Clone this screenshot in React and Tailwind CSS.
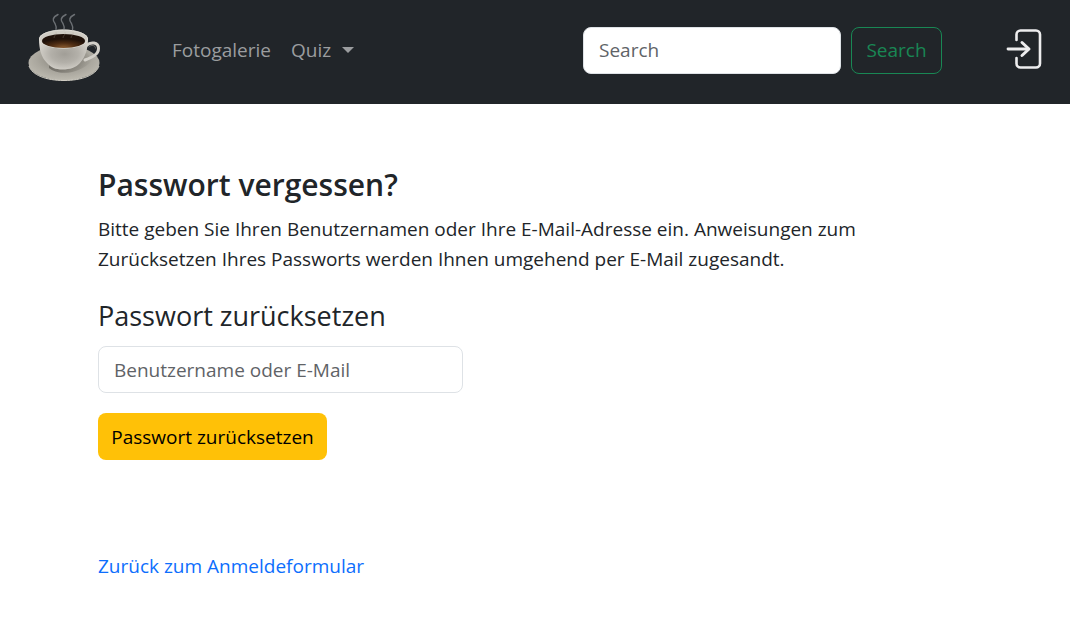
function CoffeeLogo() {
  return (
    <svg width="76" height="72" viewBox="0 0 76 72" fill="none" aria-hidden="true">
      <defs>
        <radialGradient id="saucer" cx="0.5" cy="0.4" r="0.62">
          <stop offset="0" stopColor="#7d7a72" />
          <stop offset="0.6" stopColor="#a9a69d" />
          <stop offset="1" stopColor="#bfbcb2" />
        </radialGradient>
        <radialGradient id="cup" cx="0.52" cy="0.5" r="0.62">
          <stop offset="0" stopColor="#a19e97" />
          <stop offset="0.45" stopColor="#b3b0a9" />
          <stop offset="0.85" stopColor="#d2cfc8" />
          <stop offset="1" stopColor="#dfdcd5" />
        </radialGradient>
        <radialGradient id="coffee" cx="0.5" cy="0.95" r="0.6">
          <stop offset="0" stopColor="#86582e" />
          <stop offset="0.5" stopColor="#4d2c13" />
          <stop offset="1" stopColor="#1f1109" />
        </radialGradient>
        <linearGradient id="shadow" x1="0" y1="0" x2="1" y2="0">
          <stop offset="0" stopColor="#5d5a53" stopOpacity="0.7" />
          <stop offset="1" stopColor="#5d5a53" stopOpacity="0" />
        </linearGradient>
      </defs>
      <ellipse cx="37" cy="51" rx="35.500" ry="17.500" fill="url(#saucer)" />
      <path d="M2 54c3 9 17 14.500 35 14.500S69 63 72 54" stroke="#d3d0c6" strokeWidth="1" />
      <path d="M22 56c8 7 28 8 44-8l-6-7-38 9z" fill="url(#shadow)" />
      <path
        d="M59.500 33.500c4-4 12-3.500 12 3 0 6-6 8.500-13.500 11.500"
        stroke="#d3d0c9"
        strokeWidth="3"
        strokeLinecap="round"
      />
      <path d="M61.500 35c3-2.500 7-2 7 1.500" stroke="#8a8780" strokeWidth="0.700" />
      <path d="M12 26.500c0 11 2.500 19 8 24.500 4 4.500 8 6.500 15.500 6.500S49 55.500 53 51c5-5.500 8-13.500 8-24.500z" fill="url(#cup)" />
      <ellipse cx="36.500" cy="27" rx="24.500" ry="9.500" fill="#cfccc4" />
      <ellipse cx="36.500" cy="27" rx="24" ry="9" stroke="#e2dfd9" strokeWidth="0.800" />
      <ellipse cx="36.500" cy="29" rx="21.500" ry="7" fill="url(#coffee)" />
      <path d="M27 26c0-3 3-3 2-6M36 26c0-3 3-3 2-6M44 26c0-3 3-3 2-6" stroke="#a79c91" strokeWidth="0.700" opacity="0.4" />
      <g stroke="#8d9195" strokeWidth="1.400" strokeLinecap="round" opacity="0.7">
        <path d="M31 2.500c-6 3-5.500 6-3 9 1 2 1.500 4 1 6" />
        <path d="M39 2.500c-6 3-5.500 6-3 9 1 2 1.500 4 1 6" />
        <path d="M47.500 2.500c-6 3-5.500 6-3 9 1 2 1.500 4 1 6" />
      </g>
    </svg>
  );
}

function LoginIcon() {
  return (
    <svg width="38" height="42" viewBox="0 0 38 42" fill="none" stroke="#ededee" strokeLinecap="round" strokeLinejoin="round" aria-hidden="true">
      <path d="M10.500 11V5.500a4 4 0 0 1 4-4H30a4 4 0 0 1 4 4v29a4 4 0 0 1-4 4H14.500a4 4 0 0 1-4-4V29" strokeWidth="2.600" />
      <path d="M2 20H22" strokeWidth="2.800" />
      <path d="M16 13.500l7 6.500-7 6.500" strokeWidth="3" />
    </svg>
  );
}

export default function App() {
  return (
    <div className="min-h-screen bg-white font-['Open_Sans','Noto_Sans',sans-serif] text-[19px] leading-[30px] text-[#212529]">
      <header className="flex h-[104px] items-center bg-[#212529] pr-[26px] pb-1 pl-[27px]">
        <a href="#" aria-label="Startseite" className="-mt-1">
          <CoffeeLogo />
        </a>
        <nav className="ml-[69px] flex items-center gap-5 text-[#9b9d9f]">
          <a href="#">Fotogalerie</a>
          <button type="button" className="flex items-center gap-[11px]">
            Quiz
            <svg width="12" height="6" viewBox="0 0 12 6" fill="currentColor" aria-hidden="true">
              <path d="M0 0h12L6 6z" />
            </svg>
          </button>
        </nav>
        <form className="ml-auto flex items-center gap-[10px]" onSubmit={(e) => e.preventDefault()}>
          <input
            type="search"
            aria-label="Search"
            placeholder="Search"
            className="h-[47px] w-[258px] rounded-lg border border-[#dee2e6] bg-white px-[15px] text-[#212529] placeholder:text-[#5f6367]"
          />
          <button type="submit" className="h-[47px] w-[91px] rounded-lg border border-[#198754] text-[#198754]">
            Search
          </button>
        </form>
        <a href="#" aria-label="Anmelden" className="ml-16">
          <LoginIcon />
        </a>
      </header>

      <main className="px-[98px] pt-[61px]">
        <h1 className="text-[30px] leading-10 font-semibold">Passwort vergessen?</h1>
        <p className="mt-[9px] max-w-[800px]">
          Bitte geben Sie Ihren Benutzernamen oder Ihre E-Mail-Adresse ein. Anweisungen zum Zurücksetzen Ihres
          Passworts werden Ihnen umgehend per E-Mail zugesandt.
        </p>
        <form className="mt-6 flex flex-col items-start" onSubmit={(e) => e.preventDefault()}>
          <label htmlFor="account" className="text-[27px] leading-9">
            Passwort zurücksetzen
          </label>
          <input
            id="account"
            type="text"
            placeholder="Benutzername oder E-Mail"
            className="mt-3 h-[47px] w-[365px] rounded-lg border border-[#dee2e6] px-[15px] placeholder:text-[#5f6367]"
          />
          <button type="submit" className="mt-5 h-[47px] w-[229px] rounded-lg bg-[#ffc107] text-black">
            Passwort zurücksetzen
          </button>
        </form>
        <a href="#" className="mt-[91px] inline-block text-[#0d6efd]">
          Zurück zum Anmeldeformular
        </a>
      </main>
    </div>
  );
}
